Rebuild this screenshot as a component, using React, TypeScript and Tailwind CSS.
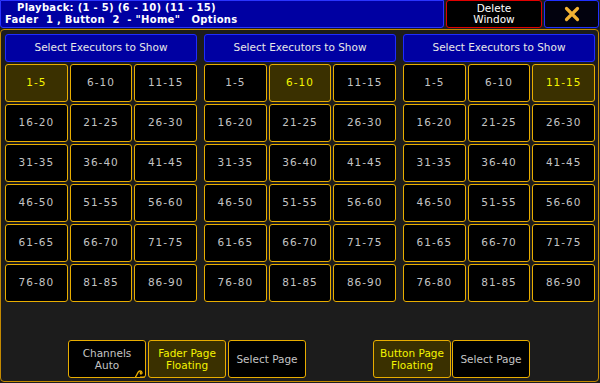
import React from "react";

const font = { fontFamily: '"DejaVu Sans", Verdana, sans-serif' };

function Cell({ label, active }: { label: string; active?: boolean }) {
  return (
    <div
      className={`h-[38px] flex items-center justify-center rounded-[3px] border border-[#e8ad00] text-[10.5px] tracking-[1px] ${
        active ? "bg-[#3a3000] text-[#f4f400]" : "bg-black text-[#c4c4c4]"
      }`}
    >
      {label}
    </div>
  );
}

function Column({ active }: { active: number }) {
  const labels: string[] = [];
  for (let i = 0; i < 18; i++) labels.push(`${i * 5 + 1}-${i * 5 + 5}`);
  return (
    <div className="w-[192px] flex flex-col gap-[2px]">
      <div className="h-[28px] flex items-center justify-center rounded-[3px] border border-[#1e2cff] bg-[#0000a2] text-[10.5px] text-[#e8e8e8]">
        Select Executors to Show
      </div>
      <div className="grid grid-cols-3 gap-[2px]">
        {labels.map((l, i) => (
          <Cell key={l} label={l} active={i === active} />
        ))}
      </div>
    </div>
  );
}

function BottomBtn({
  lines,
  active,
  curl,
}: {
  lines: string[];
  active?: boolean;
  curl?: boolean;
}) {
  return (
    <div
      className={`relative w-[78px] h-[38px] flex flex-col items-center justify-center rounded-[3px] border border-[#e8ad00] text-[10.5px] leading-[12px] ${
        active ? "bg-[#3a3000] text-[#f4f400]" : "bg-black text-[#c4c4c4]"
      }`}
    >
      {lines.map((l) => (
        <div key={l}>{l}</div>
      ))}
      {curl && (
        <svg
          className="absolute right-[-1px] bottom-[-1px]"
          width="12"
          height="10"
          viewBox="0 0 12 10"
        >
          <path
            d="M1 9 C3 9 3 3 6 3 C8.5 3 8.5 6 7 6 C6 6 6 4.5 7 4.5"
            fill="none"
            stroke="#e8ad00"
            strokeWidth="1.3"
          />
          <path d="M6 9 L11 9" stroke="#e8ad00" strokeWidth="1" />
        </svg>
      )}
    </div>
  );
}

export default function App() {
  return (
    <div className="w-[600px] h-[383px] bg-[#1c1c1c] flex flex-col overflow-hidden" style={font}>
      <div className="h-[28px] flex gap-[2px] pr-[1px]">
        <div className="w-[444px] h-[28px] rounded-b-[3px] border border-[#2a34ff] bg-[#0000a2] text-white font-bold text-[10px] leading-[12px] pt-[1px] tracking-[0.3px]">
          <div className="pl-[16px] whitespace-pre">Playback: (1 - 5) (6 - 10) (11 - 15)</div>
          <div className="pl-[4px] whitespace-pre">{'Fader  1 , Button  2  - "Home"   Options'}</div>
        </div>
        <div className="w-[96px] h-[28px] rounded-[3px] border border-[#e00000] bg-black text-white text-[10.5px] leading-[11px] flex flex-col items-center justify-center">
          <div>Delete</div>
          <div>Window</div>
        </div>
        <div className="flex-1 h-[28px] rounded-[3px] border border-[#2030ff] bg-[#02020e] flex items-center justify-center">
          <svg width="16" height="16" viewBox="0 0 16 16">
            <path
              d="M2.5 2.5 L13.5 13.5 M13.5 2.5 L2.5 13.5"
              stroke="#f2b233"
              strokeWidth="3.2"
              strokeLinecap="round"
            />
          </svg>
        </div>
      </div>
      <div className="mt-[1px] w-[599px] h-[353px] rounded-[4px] border border-[#c48a00] bg-[#1c1c1c] pl-[4px] pt-[4px] flex flex-col">
        <div className="flex gap-[7px]">
          <Column active={0} />
          <Column active={1} />
          <Column active={2} />
        </div>
        <div className="mt-[38px] flex">
          <div className="ml-[63px] flex gap-[2px]">
            <BottomBtn lines={["Channels", "Auto"]} curl />
            <BottomBtn lines={["Fader Page", "Floating"]} active />
            <BottomBtn lines={["Select Page"]} />
          </div>
          <div className="ml-[67px] flex gap-[1px]">
            <BottomBtn lines={["Button Page", "Floating"]} active />
            <BottomBtn lines={["Select Page"]} />
          </div>
        </div>
      </div>
    </div>
  );
}
